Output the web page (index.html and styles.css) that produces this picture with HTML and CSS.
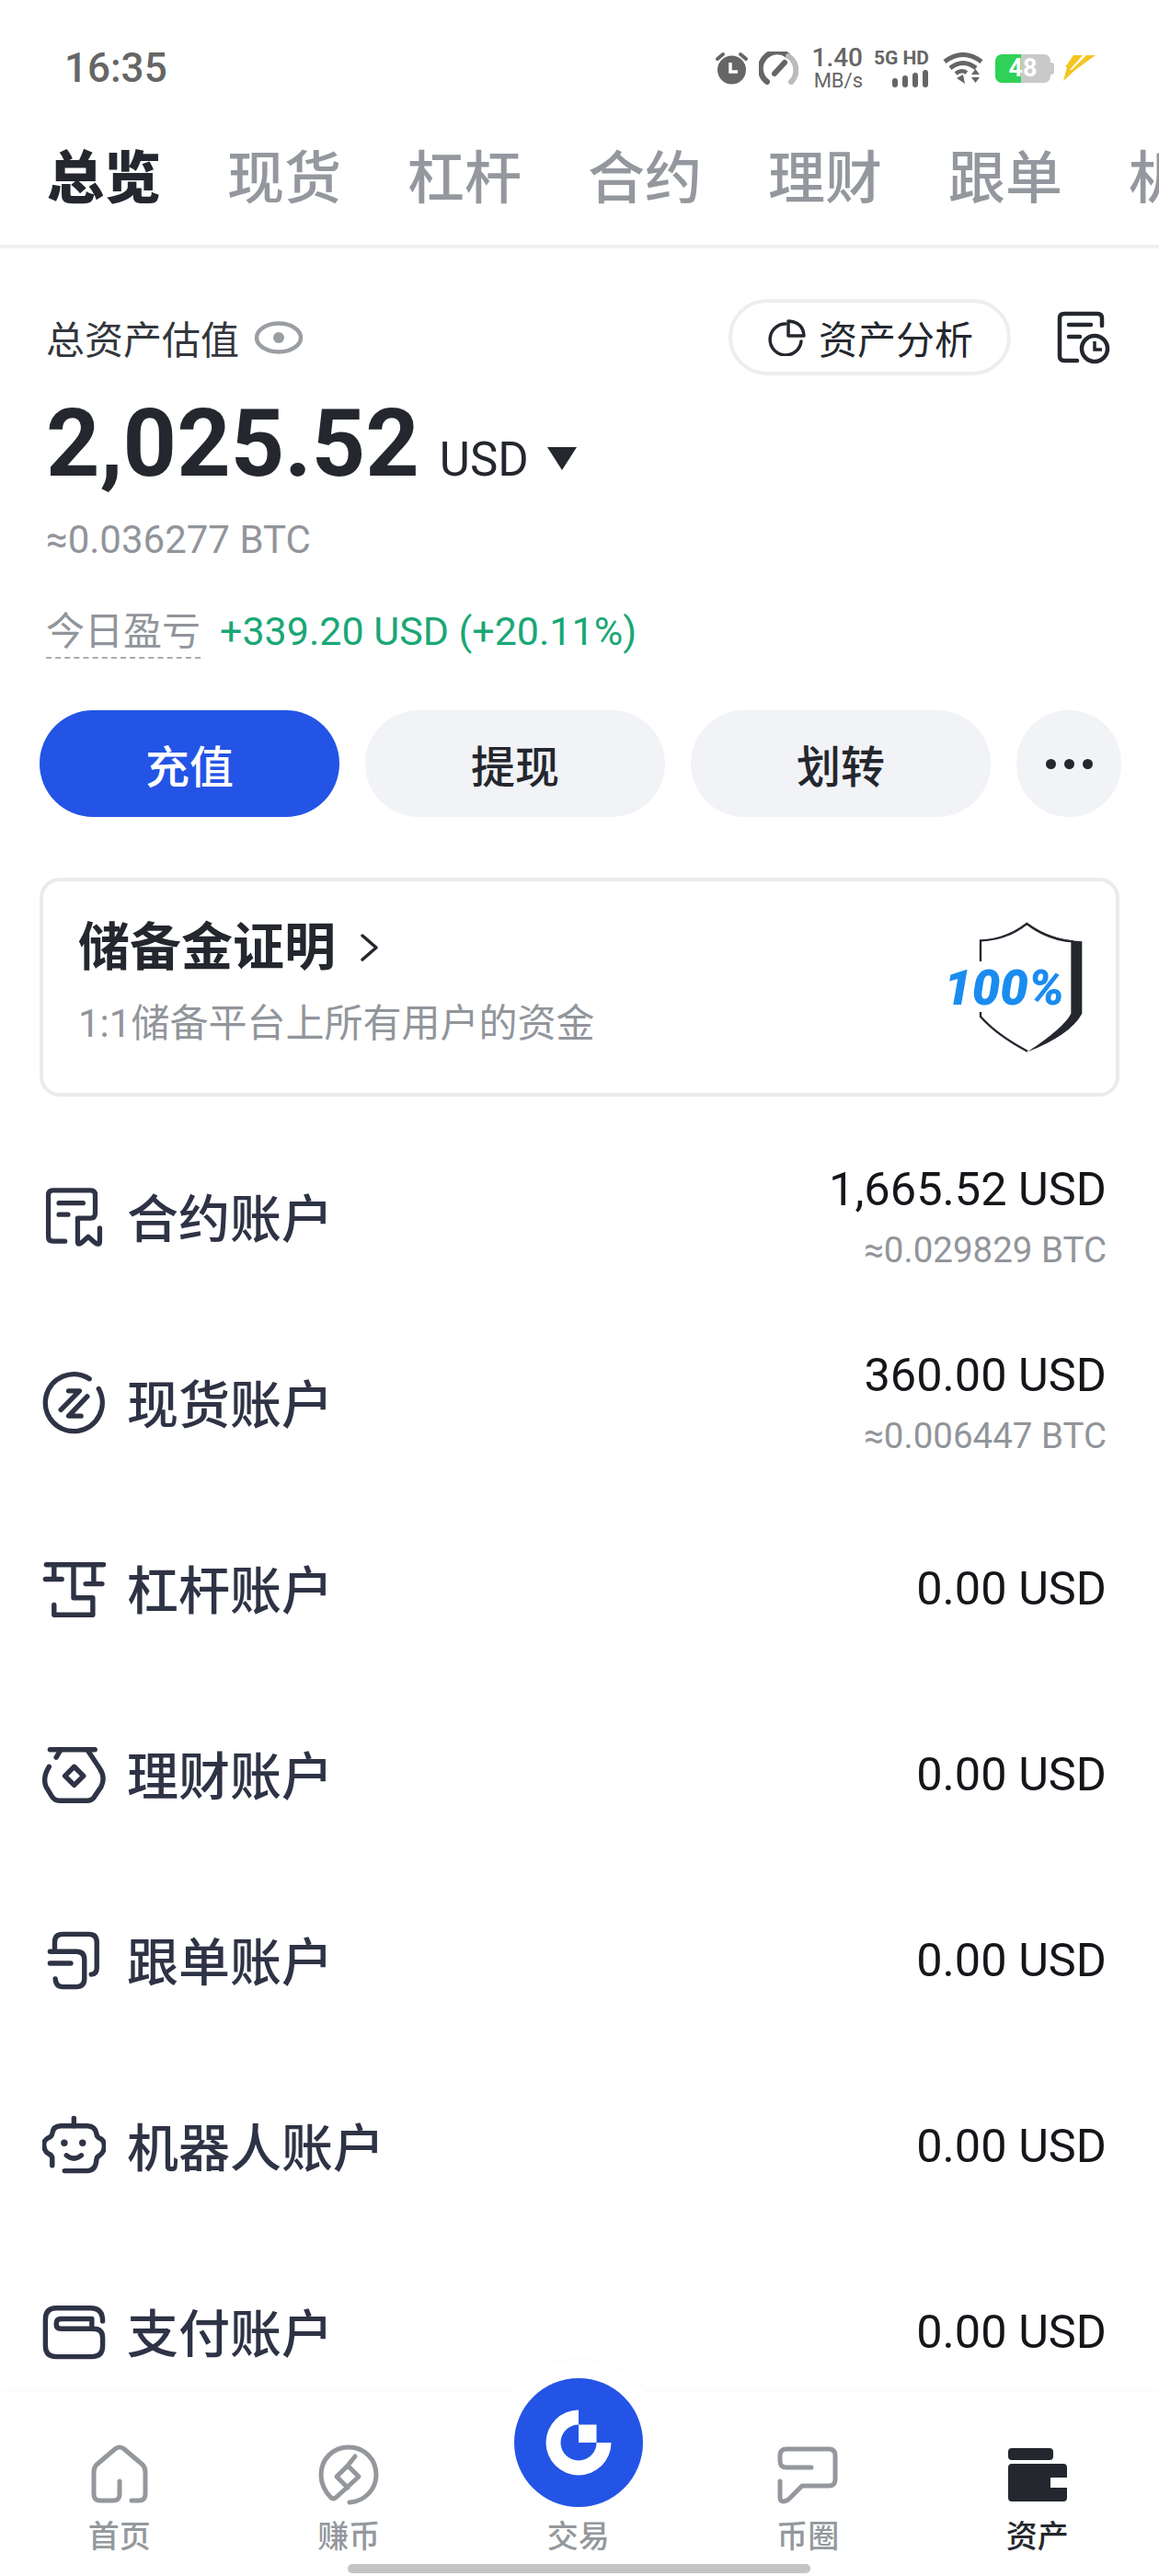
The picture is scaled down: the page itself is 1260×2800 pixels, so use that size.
FILE: index.html
```html
<!DOCTYPE html>
<html lang="zh-CN">
<head>
    <meta charset="UTF-8">
    <title>资产总览</title>
    <link rel="stylesheet" href="styles.css">
</head>
<body>
    <!-- Status bar -->
    <div class="status-bar">
        <span class="clock">16:35</span>
        <div class="status-icons">
            <svg class="st-alarm" width="39" height="36" viewBox="0 0 39 36">
                <circle cx="19.5" cy="20" r="15.5" fill="#666"/>
                <path d="M4 8 L10 3 M35 8 L29 3" stroke="#666" stroke-width="4" stroke-linecap="round"/>
                <path d="M18 12 V22 H26" fill="none" stroke="#fff" stroke-width="3.5"/>
            </svg>
            <svg class="st-gauge" width="43" height="36" viewBox="0 0 43 36">
                <path d="M9 33 A18 18 0 0 1 31 4" fill="none" stroke="#666" stroke-width="6" stroke-linecap="round"/>
                <path d="M32 5 A18 18 0 0 1 35 33" fill="none" stroke="#bbb" stroke-width="6" stroke-linecap="round"/>
                <path d="M17 24 L28 12" stroke="#666" stroke-width="6" stroke-linecap="round"/>
            </svg>
            <div class="st-speed"><span>1.40</span><span class="st-unit">MB/s</span></div>
            <div class="st-net">
                <span>5G HD</span>
                <svg width="40" height="19" viewBox="0 0 40 19">
                    <rect x="0" y="9" width="6" height="10" rx="3" fill="#666"/>
                    <rect x="11" y="6" width="6" height="13" rx="3" fill="#666"/>
                    <rect x="22" y="3" width="6" height="16" rx="3" fill="#666"/>
                    <rect x="33" y="0" width="6" height="19" rx="3" fill="#666"/>
                </svg>
            </div>
            <svg class="st-wifi" width="44" height="34" viewBox="0 0 44 34">
                <path d="M2 10 Q22 -5 42 10 M8 17 Q22 6 36 17" fill="none" stroke="#666" stroke-width="5"/>
                <path d="M14 23 Q20 18 26 22" fill="none" stroke="#666" stroke-width="4.5"/>
                <path d="M15 28 L22 24 L24 34 Z" fill="#666"/>
                <path d="M31 24 L35.5 18 L40 24 Z M31 27 H40 L35.5 33 Z" fill="#666"/>
            </svg>
            <div class="st-battery"><span>48</span><i class="st-nub"></i></div>
            <svg class="st-bolt" width="36" height="30" viewBox="0 0 36 30">
                <path d="M12 1 H22 L8 17 H14 L1 29 L5 14 H3 Z" fill="#f4c520"/>
                <path d="M26 1 H36 L14 17 H10 Z" fill="#f4c520"/>
            </svg>
        </div>
    </div>

    <!-- Category tabs -->
    <div class="top-tabs">
        <span class="top-tab active">总览</span>
        <span class="top-tab">现货</span>
        <span class="top-tab">杠杆</span>
        <span class="top-tab">合约</span>
        <span class="top-tab">理财</span>
        <span class="top-tab">跟单</span>
        <span class="top-tab">机器人</span>
    </div>

    <!-- Balance -->
    <div class="overview">
        <div class="overview-head">
            <span class="total-label">总资产估值</span>
            <svg class="eye" width="54" height="36" viewBox="0 0 54 36">
                <ellipse cx="27" cy="18" rx="24" ry="15.5" fill="none" stroke="#9a9ea3" stroke-width="4.5"/>
                <circle cx="27" cy="18" r="6" fill="#9a9ea3"/>
            </svg>
            <div class="analysis-pill">
                <svg width="42" height="40" viewBox="0 0 42 40">
                    <path d="M20 5 A17 17 0 1 0 37 24" fill="none" stroke="#24272e" stroke-width="3.5" stroke-linecap="round"/>
                    <path d="M23 2 Q39 3 40 18 H23 Z" fill="none" stroke="#24272e" stroke-width="3.5" stroke-linejoin="round"/>
                </svg>
                <span>资产分析</span>
            </div>
            <svg class="history" width="58" height="58" viewBox="0 0 58 58">
                <path d="M22 54 H8 Q3 54 3 49 V8 Q3 3 8 3 H44 Q49 3 49 8 V16" fill="none" stroke="#24272e" stroke-width="4.5" stroke-linecap="round"/>
                <path d="M13 15 H37 M13 28 H25" stroke="#24272e" stroke-width="4.5" stroke-linecap="round"/>
                <circle cx="41" cy="41" r="14" fill="none" stroke="#24272e" stroke-width="4.5"/>
                <path d="M41 33 V42 H49" fill="none" stroke="#24272e" stroke-width="3.5"/>
            </svg>
        </div>
        <div class="amount-row">
            <span class="amount">2,025.52</span>
            <span class="amount-unit">USD</span>
            <i class="caret"></i>
        </div>
        <div class="amount-btc">≈0.036277 BTC</div>
        <div class="pnl-row">
            <span class="pnl-label">今日盈亏</span>
            <span class="pnl-value">+339.20 USD (+20.11%)</span>
        </div>
    </div>

    <!-- Actions -->
    <div class="actions">
        <div class="action primary">充值</div>
        <div class="action">提现</div>
        <div class="action">划转</div>
        <div class="action more"><i></i><i></i><i></i></div>
    </div>

    <!-- Proof of reserves -->
    <div class="reserve-card">
        <div class="reserve-text">
            <div class="reserve-title">
                <span>储备金证明</span>
                <svg width="22" height="32" viewBox="0 0 22 32">
                    <path d="M3 3 L18 16 L3 29" fill="none" stroke="#24272e" stroke-width="3.5" stroke-linecap="round" stroke-linejoin="round"/>
                </svg>
            </div>
            <div class="reserve-sub">1:1储备平台上所有用户的资金</div>
        </div>
        <svg class="shield" width="154" height="147" viewBox="80 55 462 441">
            <path d="M350 65 Q425 120 528 125 V360 Q490 430 350 485 Q470 405 492 360 V125 Q410 115 350 65 Z" fill="#24272e"/>
            <path d="M197 190 V122 Q280 120 348 67 Q420 122 500 125 M197 355 V370 Q250 430 350 483" fill="none" stroke="#24272e" stroke-width="7"/>
            <text class="shield-text" x="78" y="330" textLength="392" lengthAdjust="spacingAndGlyphs">100%</text>
        </svg>
    </div>

    <!-- Accounts -->
    <div class="accounts">
        <div class="account">
            <svg class="account-icon" viewBox="85 75 200 210">
                <path d="M155 258 H115 Q100 258 100 243 V105 Q100 90 115 90 H240 Q255 90 255 105 V165 Q255 182 240 182 H197 V258 Q197 274 210 263 L232 243 L254 263 Q270 274 270 258 V215"/>
                <path d="M135 132 H215 M135 170 H165"/>
            </svg>
            <span class="account-name">合约账户</span>
            <div class="account-value">
                <span>1,665.52 USD</span>
                <span class="account-btc">≈0.029829 BTC</span>
            </div>
        </div>
        <div class="account">
            <svg class="account-icon" viewBox="80 685 205 205">
                <path d="M232 708 A92 92 0 1 0 262 740"/>
                <path d="M165 747 H200 L140 808 M225 765 L165 828 H205"/>
            </svg>
            <span class="account-name">现货账户</span>
            <div class="account-value">
                <span>360.00 USD</span>
                <span class="account-btc">≈0.006447 BTC</span>
            </div>
        </div>
        <div class="account">
            <svg class="account-icon" viewBox="82 -25 205 205">
                <path d="M95 -2 H280 M120 -2 V45 M92 45 H145 M248 -2 V60 M222 60 H275"/>
                <path d="M183 -2 V105 H245 V160 H120 V128"/>
            </svg>
            <span class="account-name">杠杆账户</span>
            <div class="account-value"><span>0.00 USD</span></div>
        </div>
        <div class="account">
            <svg class="account-icon" viewBox="80 585 205 205">
                <path d="M105 605 H250 M125 630 L140 605"/>
                <path d="M225 605 L265 665 Q285 695 270 725 L245 762 Q238 770 225 770 H135 Q120 770 110 755 L92 725 Q80 695 102 660"/>
                <path d="M183 660 L213 690 L183 720 L153 690 Z"/>
            </svg>
            <span class="account-name">理财账户</span>
            <div class="account-value"><span>0.00 USD</span></div>
        </div>
        <div class="account">
            <svg class="account-icon" viewBox="0 0 205 205">
                <path d="M40 60 V42 Q40 16 66 16 H150 Q176 16 176 42 V125 Q176 145 158 146"/>
                <path d="M25 72 H110 Q136 72 136 98 V160 Q136 186 110 186 H66 Q44 186 42 160"/>
                <path d="M25 110 H92"/>
            </svg>
            <span class="account-name">跟单账户</span>
            <div class="account-value"><span>0.00 USD</span></div>
        </div>
        <div class="account">
            <svg class="account-icon" viewBox="80 55 205 205">
                <path d="M182 65 V90"/>
                <path d="M112 218 V195 Q112 185 100 180 Q85 170 85 150 Q85 135 100 128 Q110 125 112 115 Q115 90 140 90 H225 Q250 90 255 115 Q256 125 265 130 Q280 135 280 155 Q280 175 265 185 Q255 190 255 200 Q252 235 225 235 H152"/>
                <path d="M158 185 Q182 205 206 185"/>
                <circle class="icon-dot" cx="151" cy="145" r="11"/>
                <circle class="icon-dot" cx="210" cy="145" r="11"/>
            </svg>
            <span class="account-name">机器人账户</span>
            <div class="account-value"><span>0.00 USD</span></div>
        </div>
        <div class="account">
            <svg class="account-icon" viewBox="80 655 205 205">
                <path d="M275 720 Q275 678 235 678 H125 Q90 678 90 715 V800 Q90 835 125 835 H240 Q275 835 275 800 V775 Q275 745 245 745 H140 Q125 745 125 730 Q125 713 140 713 H240 V745"/>
            </svg>
            <span class="account-name">支付账户</span>
            <div class="account-value"><span>0.00 USD</span></div>
        </div>
    </div>

    <!-- Bottom navigation -->
    <div class="tab-bar">
        <i class="tab-bump"></i>
        <div class="tab-grid">
            <div class="tab">
                <svg class="tab-icon" width="62" height="66" viewBox="0 0 62 66">
                    <path d="M31 40 V54 Q31 61 24 61 H10 Q3 61 3 54 V30 Q3 25 6 22 L26 5 Q31 1 36 5 L56 22 Q59 25 59 30 V54 Q59 61 52 61 H44"/>
                </svg>
                <span>首页</span>
            </div>
            <div class="tab">
                <svg class="tab-icon" width="66" height="66" viewBox="0 0 66 66">
                    <path d="M34 63 C50 62 63 49 63 33 C63 16 50 3 33 3 C16 3 3 16 3 33 C3 43 8 52 14 58 Q17 60 20 57 L44 35 L32 23 L20 35 L32 47 M32 23 L40 13"/>
                </svg>
                <span>赚币</span>
            </div>
            <div class="tab tab-center">
                <div class="trade-btn">
                    <svg width="72" height="72" viewBox="-36 -36 72 72">
                        <path d="M0 -35.5 A35.5 35.5 0 1 0 35.5 0 H19.5 A19.5 19.5 0 1 1 0 -19.5 Z" fill="#fff"/>
                        <rect x="0" y="-19.5" width="19.5" height="19.5" fill="#fff"/>
                    </svg>
                </div>
                <span>交易</span>
            </div>
            <div class="tab">
                <svg class="tab-icon" width="66" height="66" viewBox="0 0 66 66">
                    <path d="M37 25 H10 Q3 25 3 18 V12 Q3 5 10 5 H56 Q63 5 63 12 V38 Q63 45 56 45 H27 L12 60 Q3 65 3 57 V40"/>
                </svg>
                <span>币圈</span>
            </div>
            <div class="tab active">
                <svg class="tab-icon" width="64" height="66" viewBox="0 0 64 66">
                    <rect x="0" y="4" width="49" height="13" rx="4" fill="#24272e"/>
                    <path d="M4 21 H60 Q64 21 64 25 V36 H46 V47 H64 V58 Q64 62 60 62 H4 Q0 62 0 58 V25 Q0 21 4 21 Z" fill="#24272e"/>
                </svg>
                <span>资产</span>
            </div>
        </div>
        <div class="home-bar"></div>
    </div>
</body>
</html>
```

FILE: styles.css
```css
* {
    box-sizing: border-box;
}

body {
    margin: 0;
    width: 1260px;
    height: 2800px;
    overflow: hidden;
    display: flex;
    flex-direction: column;
    background: #fff;
    color: #24272e;
    font-family: Roboto, "Noto Sans CJK SC", sans-serif;
}

/* Status bar */
.status-bar {
    height: 146px;
    flex: none;
    display: flex;
    justify-content: space-between;
    align-items: center;
    padding: 2px 69px 0 70px;
    color: #666;
}

.clock {
    font-size: 44px;
    font-weight: 500;
}

.status-icons {
    display: flex;
    align-items: center;
    gap: 10px;
}

.st-alarm, .st-gauge {
    flex: none;
}

.st-speed, .st-net {
    display: flex;
    flex-direction: column;
    align-items: flex-end;
    font-weight: 500;
    line-height: 1;
}

.st-speed {
    width: 58px;
    margin-left: 2px;
    font-size: 28px;
}

.st-speed .st-unit {
    font-size: 22px;
    font-weight: 400;
}

.st-net {
    width: 60px;
    margin-left: 2px;
    font-size: 21px;
    font-weight: 700;
    white-space: nowrap;
    gap: 2px;
}

.st-wifi {
    margin-left: 5px;
}

.st-battery {
    position: relative;
    width: 60px;
    height: 31px;
    margin-left: 3px;
    margin-right: 1px;
    border-radius: 7px;
    background: linear-gradient(to right, #30d158 0, #30d158 28px, #c9c9c9 28px);
    color: #fff;
    font-size: 27px;
    font-weight: 700;
    line-height: 31px;
    text-align: center;
}

.st-nub {
    position: absolute;
    right: -4px;
    top: 9px;
    width: 4px;
    height: 13px;
    border-radius: 0 3px 3px 0;
    background: #c9c9c9;
}

.st-bolt {
    margin-left: 2px;
}

/* Category tabs */
.top-tabs {
    height: 124px;
    flex: none;
    display: flex;
    gap: 72px;
    padding: 4px 0 0 51px;
    border-bottom: 4px solid #eef0f2;
    overflow: hidden;
    white-space: nowrap;
}

.top-tab {
    flex: none;
    font-size: 62px;
    line-height: 90px;
    font-weight: 500;
    color: #94989e;
}

.top-tab.active {
    color: #24272e;
    font-weight: 900;
}

/* Balance */
.overview {
    flex: none;
    padding: 55px 0 0 50px;
}

.overview-head {
    height: 83px;
    display: flex;
    align-items: center;
}

.total-label {
    font-size: 42px;
    color: #33363d;
}

.eye {
    margin-left: 16px;
}

.analysis-pill {
    height: 83px;
    width: 307px;
    margin-left: auto;
    display: flex;
    align-items: center;
    gap: 14px;
    padding-left: 38px;
    border: 4px solid #eceef0;
    border-radius: 42px;
    font-size: 42px;
}

.history {
    margin: 0 53px 0 50px;
}

.amount-row {
    height: 100px;
    margin-top: 24px;
    display: flex;
    align-items: baseline;
}

.amount {
    font-size: 102px;
    line-height: 100px;
    font-weight: 700;
}

.amount-unit {
    margin-left: 22px;
    font-size: 51px;
}

.caret {
    align-self: center;
    margin: 33px 0 0 20px;
    width: 0;
    height: 0;
    border-left: 16px solid transparent;
    border-right: 16px solid transparent;
    border-top: 25px solid #24272e;
}

.amount-btc {
    margin-top: 30px;
    font-size: 42px;
    line-height: 50px;
    color: #91959b;
}

.pnl-row {
    margin-top: 49px;
    display: flex;
    align-items: baseline;
    gap: 21px;
    font-size: 42px;
    line-height: 50px;
}

.pnl-label {
    color: #91959b;
    padding-bottom: 2px;
    border-bottom: 2px dashed #a9adb2;
}

.pnl-value {
    color: #1aa776;
    font-size: 43px;
}

/* Actions */
.actions {
    flex: none;
    display: flex;
    gap: 28px;
    margin-top: 56px;
    padding: 0 41px 0 43px;
}

.action {
    flex: 1;
    height: 116px;
    display: flex;
    align-items: center;
    justify-content: center;
    border-radius: 58px;
    background: #f1f3f6;
    font-size: 48px;
    font-weight: 500;
}

.action.primary {
    background: #2354e6;
    color: #fff;
}

.action.more {
    flex: none;
    width: 114px;
    gap: 9px;
}

.action.more i {
    width: 11px;
    height: 11px;
    border-radius: 50%;
    background: #24272e;
}

/* Proof of reserves */
.reserve-card {
    flex: none;
    height: 238px;
    margin: 66px 43px 0;
    padding: 0 32px 0 38px;
    display: flex;
    align-items: center;
    justify-content: space-between;
    border: 4px solid #e9ebee;
    border-radius: 22px;
}

.reserve-text {
    padding-bottom: 9px;
}

.reserve-title {
    display: flex;
    align-items: center;
    gap: 26px;
    font-size: 56px;
    line-height: 70px;
    font-weight: 700;
}

.reserve-sub {
    margin-top: 18px;
    font-size: 42px;
    line-height: 60px;
    color: #91959b;
}

.shield-text {
    font-family: Roboto, sans-serif;
    font-size: 162px;
    font-weight: 900;
    font-style: italic;
    fill: #1a8cf0;
}

/* Accounts */
.accounts {
    flex: 1;
    min-height: 0;
    margin-top: 30px;
    overflow: hidden;
}

.account {
    height: 202px;
    display: flex;
    align-items: center;
    padding: 0 57px 0 46px;
}

.account-icon {
    flex: none;
    width: 69px;
    height: 69px;
    fill: none;
    stroke: #2e3345;
    stroke-width: 16;
    stroke-linecap: round;
    stroke-linejoin: round;
}

.account-icon .icon-dot {
    fill: #2e3345;
    stroke: none;
}

.account-name {
    margin: 0 0 6px 23px;
    font-size: 56px;
    font-weight: 500;
    color: #2e3345;
}

.account-value {
    margin-left: auto;
    display: flex;
    flex-direction: column;
    align-items: flex-end;
    gap: 15px;
    font-size: 50.5px;
    line-height: 56px;
    color: #14161a;
}

.account-btc {
    font-size: 38.5px;
    line-height: 46px;
    color: #91959b;
}

/* Bottom navigation */
.tab-bar {
    position: relative;
    flex: none;
    height: 200px;
    background: #fff;
    box-shadow: 0 -3px 6px rgba(0, 0, 0, 0.015);
}

.tab-bump {
    position: absolute;
    left: 534px;
    top: -34px;
    width: 190px;
    height: 190px;
    border-radius: 50%;
    background: #fff;
    box-shadow: 0 -3px 6px rgba(0, 0, 0, 0.015);
}

.tab-grid {
    position: relative;
    display: grid;
    grid-template-columns: repeat(5, 249.5px);
    padding-left: 5px;
}

.tab {
    display: flex;
    flex-direction: column;
    align-items: center;
    padding-top: 57px;
    font-size: 34px;
    line-height: 44px;
    font-weight: 500;
    color: #94989c;
}

.tab span {
    margin-top: 12px;
}

.tab.active {
    color: #24272e;
}

.tab-icon {
    display: block;
    height: 66px;
    fill: none;
    stroke: #94989c;
    stroke-width: 5;
    stroke-linecap: round;
    stroke-linejoin: round;
}

.tab.active .tab-icon {
    stroke: none;
}

.tab-center {
    padding-top: 0;
}

.tab-center span {
    margin-top: 10px;
}

.trade-btn {
    width: 140px;
    height: 140px;
    margin-top: -15px;
    display: flex;
    align-items: center;
    justify-content: center;
    border-radius: 50%;
    background: #2354e6;
}

.home-bar {
    position: relative;
    width: 503px;
    height: 10px;
    margin: 8px 0 0 378px;
    border-radius: 5px;
    background: #c4c4c4;
}
```
